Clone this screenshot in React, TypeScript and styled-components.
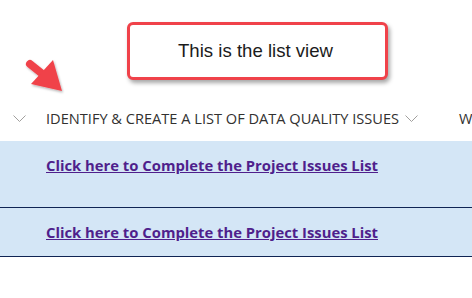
import React from 'react'
import styled, { createGlobalStyle } from 'styled-components'

const GlobalStyle = createGlobalStyle`
  html, body {
    margin: 0;
    padding: 0;
    background: #ffffff;
    overflow: hidden;
  }
  body {
    font-family: 'Open Sans', 'Noto Sans', sans-serif;
  }
`

const Page = styled.div`
  position: relative;
  width: 472px;
  height: 298px;
  padding-top: 104px;
  box-sizing: border-box;
`

const HeaderRow = styled.div`
  display: flex;
  align-items: center;
  height: 28px;
  margin-bottom: 9px;
  white-space: nowrap;
  color: #323130;
  font-size: 14.6px;
`

const ChevronCell = styled.div<{ $width: number }>`
  display: flex;
  align-items: center;
  justify-content: center;
  width: ${p => p.$width}px;
  flex-shrink: 0;
`

const HeaderTitle = styled.span`
  margin-left: 8px;
`

const NextTitle = styled.span`
  margin-left: 36px;
`

const Row = styled.div<{ $height: number }>`
  height: ${p => p.$height}px;
  background: #d4e6f6;
  border-bottom: 1px solid #0f2454;
  padding: 13px 0 0 46px;
  box-sizing: border-box;
`

const IssueLink = styled.a`
  font-weight: 700;
  font-size: 14.8px;
  color: #4f1f8c;
  text-decoration: underline;
`

const Callout = styled.div`
  position: absolute;
  left: 127px;
  top: 22px;
  width: 261px;
  height: 58px;
  box-sizing: border-box;
  border: 3px solid #f0424a;
  border-radius: 6px;
  background: #ffffff;
  box-shadow: 2px 3px 4px rgba(0, 0, 0, 0.35);
  display: flex;
  align-items: center;
  justify-content: center;
  padding-right: 4px;
  font-family: 'Liberation Sans', Arial, sans-serif;
  font-size: 18.6px;
  color: #1b1b1b;
`

const Pointer = styled.svg`
  position: absolute;
  left: 20px;
  top: 54px;
`

function Chevron() {
  return (
    <svg width="13" height="7" viewBox="0 0 13 7">
      <path d="M0.5 0.5 L6.5 6.5 L12.5 0.5" fill="none" stroke="#a19f9d" strokeWidth="1" />
    </svg>
  )
}

export default function App() {
  return (
    <Page>
      <GlobalStyle />
      <HeaderRow>
        <ChevronCell $width={38}><Chevron /></ChevronCell>
        <HeaderTitle>IDENTIFY &amp; CREATE A LIST OF DATA QUALITY ISSUES</HeaderTitle>
        <ChevronCell $width={24}><Chevron /></ChevronCell>
        <NextTitle>WHO</NextTitle>
      </HeaderRow>
      <Row $height={67}>
        <IssueLink href="#">Click here to Complete the Project Issues List</IssueLink>
      </Row>
      <Row $height={49}>
        <IssueLink href="#">Click here to Complete the Project Issues List</IssueLink>
      </Row>

      <Callout>This is the list view</Callout>
      <Pointer width="50" height="42" viewBox="20 54 50 42">
        <defs>
          <filter id="arrowShadow" x="-20%" y="-20%" width="140%" height="140%">
            <feDropShadow dx="1" dy="1.5" stdDeviation="1" floodColor="#000" floodOpacity="0.3" />
          </filter>
        </defs>
        <g filter="url(#arrowShadow)" fill="#f0424a">
          <line x1="30" y1="64" x2="45" y2="76" stroke="#f0424a" strokeWidth="8" strokeLinecap="round" />
          <polygon points="31,84 53,60 62,91" />
        </g>
      </Pointer>
    </Page>
  )
}
